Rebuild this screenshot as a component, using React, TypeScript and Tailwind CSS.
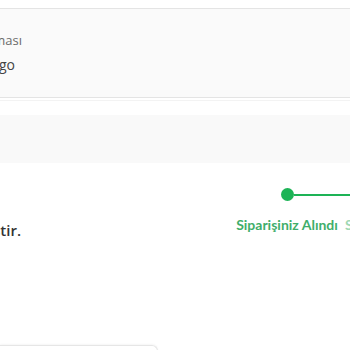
import React from "react";

export default function App() {
  return (
    <div className="w-[350px] h-[350px] overflow-hidden bg-white relative" style={{ fontFamily: '"Open Sans", "Noto Sans", sans-serif' }}>
      <div className="h-[8px]" />
      <div className="h-[90px] bg-[#fafafa] border-y border-[#e4e4e4] flex flex-col pt-[22px] gap-[6px]">
        <div className="w-[22px] flex justify-end whitespace-nowrap text-[13px] leading-[18px] text-[#6b6b6b]">Kargo Firması</div>
        <div className="w-[15px] flex justify-end whitespace-nowrap text-[14px] leading-[20px] text-[#444]">Aras Kargo</div>
      </div>
      <div className="h-[3px] border-b border-[#f3f3f3]" />
      <div className="h-[14px]" />
      <div className="h-[48px] bg-[#f9f9f9]" />
      <div className="flex">
        <div className="w-[236px] shrink-0 pt-[56px]">
          <div className="w-[21px] flex justify-end whitespace-nowrap text-[15px] leading-[22px] font-semibold text-[#333]">Siparişiniz teslim edilmiştir.</div>
        </div>
        <div className="flex-1 min-w-0 overflow-hidden pt-[25px]">
          <div className="flex items-center">
            <div className="w-[102px] shrink-0 flex justify-center">
              <div className="w-[13px] h-[13px] rounded-full bg-[#1db356]" />
            </div>
            <div className="flex-1 h-[2px] bg-[#1db356] -ml-[44px]" />
          </div>
          <div className="flex gap-[7px] mt-[16px] whitespace-nowrap">
            <div className="w-[102px] shrink-0 text-center text-[14px] leading-[16px] font-bold text-[#3fae6a]" style={{ fontFamily: 'Lato, sans-serif' }}>Siparişiniz Alındı</div>
            <div className="text-[14px] leading-[16px] font-bold text-[#9fd8b3]" style={{ fontFamily: 'Lato, sans-serif' }}>Siparişiniz Hazırlanıyor</div>
          </div>
        </div>
      </div>
      <div className="absolute left-0 top-[345px] w-[158px] h-[20px] border-t border-r border-[#e6e6e6] rounded-tr-[6px] shadow-[0_-1px_2px_rgba(0,0,0,0.04)]" />
    </div>
  );
}
